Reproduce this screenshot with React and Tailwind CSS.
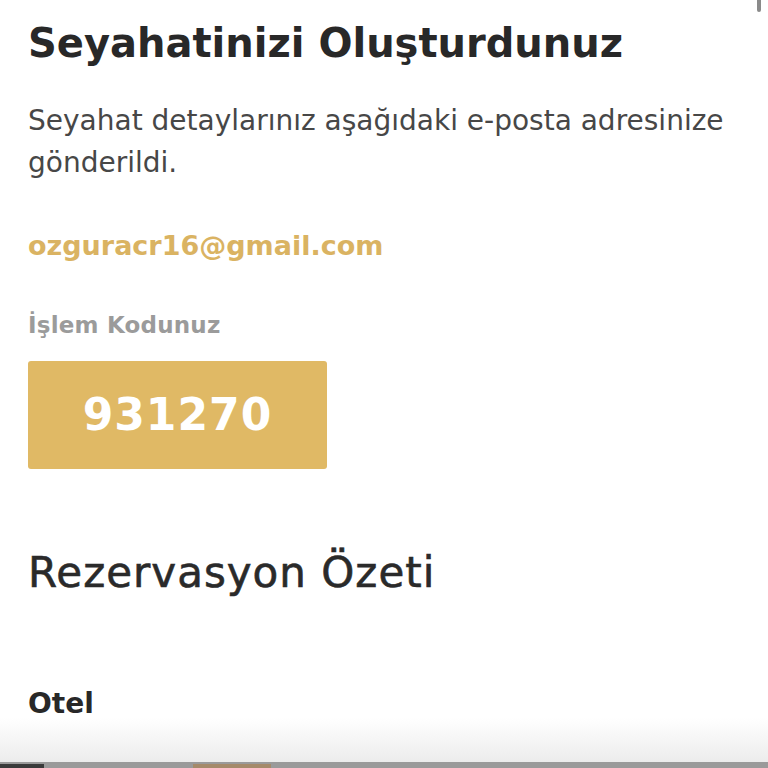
export default function App() {
  return (
    <div className="relative w-[768px] h-[768px] overflow-hidden bg-white" style={{ fontFamily: '"DejaVu Sans", sans-serif' }}>
      <div className="absolute right-[7px] top-0 w-[4px] h-[12px] rounded-b bg-[#8a8a8a]" />
      <div className="flex flex-col items-start px-[28px] pt-[19px]">
        <h1 className="text-[40px] leading-[48px] font-bold text-[#282828]">Seyahatinizi Oluşturdunuz</h1>
        <p className="mt-[33px] text-[28px] leading-[42px] text-[#474747]">
          Seyahat detaylarınız aşağıdaki e-posta adresinize gönderildi.
        </p>
        <div className="mt-[46px] text-[27px] leading-[32px] font-bold text-[#dab362]">ozguracr16@gmail.com</div>
        <div className="mt-[49px] text-[23px] leading-[28px] font-bold text-[#9b9b9b] tracking-[0.2px]">İşlem Kodunuz</div>
        <div className="mt-[22px] w-[299px] h-[108px] rounded-[3px] bg-[#e0b965] flex items-center justify-center text-white text-[44px] font-black tracking-[1px]">931270</div>
        <h2 className="mt-[80px] text-[42px] leading-[48px] font-medium text-[#2a2a2a] tracking-[1px] [-webkit-text-stroke:0.6px_#2a2a2a]">Rezervasyon Özeti</h2>
        <div className="mt-[91px] text-[28px] leading-[32px] font-bold text-[#282828]">Otel</div>
      </div>
      <div className="absolute left-0 right-0 bottom-[6px] h-[44px] bg-gradient-to-b from-white to-[#ececec]" />
      <div className="absolute left-0 right-0 bottom-0 h-[6px] bg-[#9a9a9a]" />
      <div className="absolute left-0 bottom-0 w-[44px] h-[4px] bg-[#3a3a3a]" />
      <div className="absolute left-[193px] bottom-0 w-[78px] h-[4px] bg-[#a58a6a]" />
    </div>
  );
}
